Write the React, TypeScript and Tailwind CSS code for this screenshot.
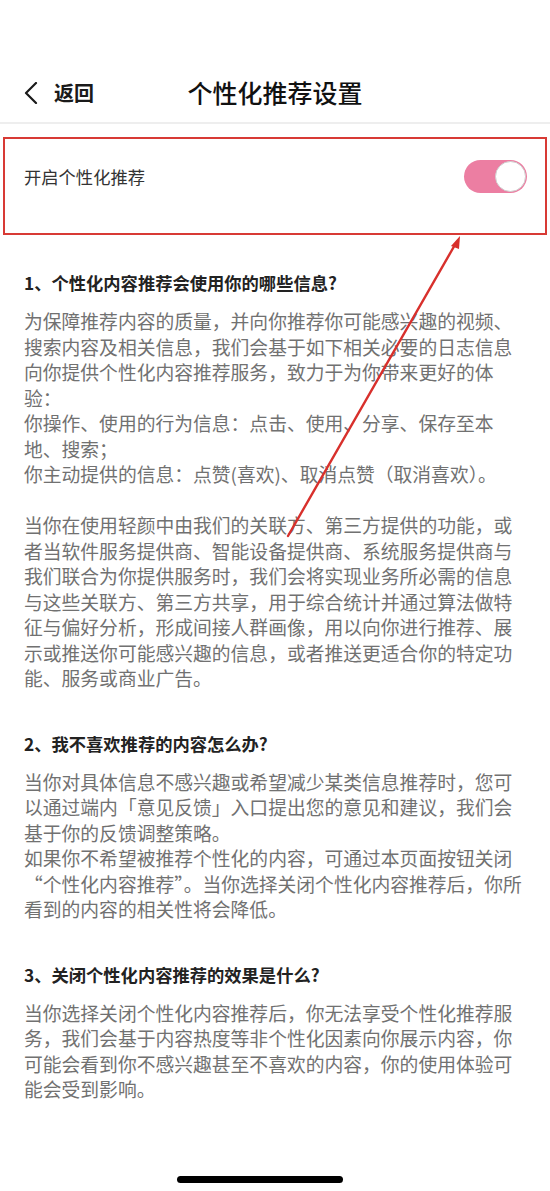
import React from 'react';

const para1 = [
  '为保障推荐内容的质量，并向你推荐你可能感兴趣的视频、',
  '搜索内容及相关信息，我们会基于如下相关必要的日志信息',
  '向你提供个性化内容推荐服务，致力于为你带来更好的体',
  '验：',
  '你操作、使用的行为信息：点击、使用、分享、保存至本',
  '地、搜索；',
  '你主动提供的信息：点赞(喜欢)、取消点赞（取消喜欢）。',
  '',
  '当你在使用轻颜中由我们的关联方、第三方提供的功能，或',
  '者当软件服务提供商、智能设备提供商、系统服务提供商与',
  '我们联合为你提供服务时，我们会将实现业务所必需的信息',
  '与这些关联方、第三方共享，用于综合统计并通过算法做特',
  '征与偏好分析，形成间接人群画像，用以向你进行推荐、展',
  '示或推送你可能感兴趣的信息，或者推送更适合你的特定功',
  '能、服务或商业广告。',
];

const para2 = [
  '当你对具体信息不感兴趣或希望减少某类信息推荐时，您可',
  '以通过端内「意见反馈」入口提出您的意见和建议，我们会',
  '基于你的反馈调整策略。',
  '如果你不希望被推荐个性化的内容，可通过本页面按钮关闭',
  '“个性化内容推荐”。当你选择关闭个性化内容推荐后，你所',
  '看到的内容的相关性将会降低。',
];

const para3 = [
  '当你选择关闭个性化内容推荐后，你无法享受个性化推荐服',
  '务，我们会基于内容热度等非个性化因素向你展示内容，你',
  '可能会看到你不感兴趣甚至不喜欢的内容，你的使用体验可',
  '能会受到影响。',
];

function Section({ title, lines, first }: { title: string; lines: string[]; first?: boolean }) {
  return (
    <section className={first ? 'mt-[35px]' : 'mt-[40px]'}>
      <h2 className="text-[17.3px] leading-[26px] font-semibold text-[#222]">{title}</h2>
      <div className="mt-[12px] text-[18.8px] leading-[25.5px] text-[#717171]">
        {lines.map((l, i) => (
          <div key={i} className="whitespace-nowrap h-[25.5px]">{l}</div>
        ))}
      </div>
    </section>
  );
}

export default function App() {
  return (
    <div
      className="relative min-h-[1191px] bg-white flex flex-col"
      style={{ fontFamily: '"Noto Sans CJK SC", "Noto Sans", sans-serif' }}
    >
      {/* nav bar */}
      <header className="relative pt-[72px] h-[122px]">
        <div className="relative h-[42px] flex items-center px-[24px]">
          <button className="flex items-center gap-[16px] text-[#1a1a1a]">
            <svg width="14" height="22" viewBox="0 0 14 22" fill="none">
              <polyline points="12,1 2,11 12,21" stroke="#1a1a1a" strokeWidth="2.2" strokeLinecap="round" strokeLinejoin="round" />
            </svg>
            <span className="text-[20px] font-semibold">返回</span>
          </button>
          <h1 className="absolute left-0 right-0 text-center text-[25px] font-medium text-[#111] pointer-events-none">
            个性化推荐设置
          </h1>
        </div>
      </header>
      <div className="h-[2px] bg-[#eeeeee]" />

      {/* highlighted toggle row */}
      <div className="mt-[13px] mx-[3px] h-[98px] border-2 border-[#d83a35]">
        <div className="flex items-center justify-between pl-[19px] pr-[18px] pt-[21px]">
          <span className="text-[17.3px] text-[#333]">开启个性化推荐</span>
          <div className="w-[63px] h-[33px] rounded-full bg-[#ec7ea2] flex justify-end items-center p-[1px]">
            <div className="w-[31px] h-[31px] rounded-full bg-white border border-[#cfcfcf]" />
          </div>
        </div>
      </div>

      <main className="px-[24px]">
        <Section first title="1、个性化内容推荐会使用你的哪些信息?" lines={para1} />
        <Section title="2、我不喜欢推荐的内容怎么办?" lines={para2} />
        <Section title="3、关闭个性化内容推荐的效果是什么?" lines={para3} />
      </main>

      {/* home indicator */}
      <div className="mt-auto mb-[8px] ml-[177px] w-[166px] h-[7px] rounded-full bg-black" />

      {/* annotation arrow */}
      <svg className="absolute inset-0 pointer-events-none" width="550" height="1191" viewBox="0 0 550 1191">
        <line x1="288" y1="536" x2="456" y2="243" stroke="#d8302c" strokeWidth="2.4" strokeLinecap="round" />
        <polygon points="460,236 451,246 459,249" fill="#d8302c" />
      </svg>
    </div>
  );
}
